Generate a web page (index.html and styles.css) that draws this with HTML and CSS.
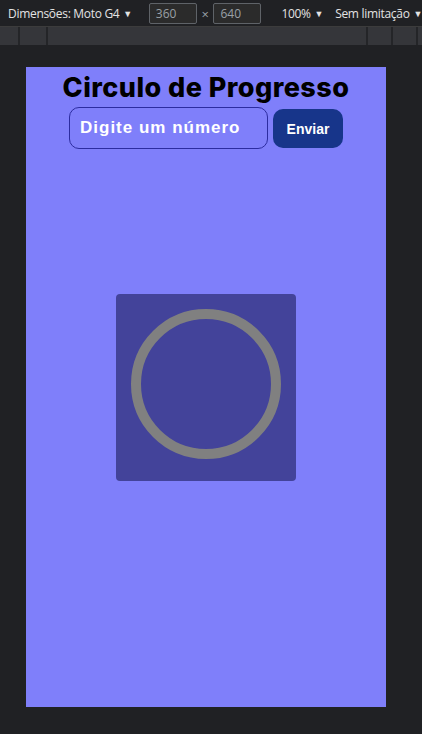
FILE: index.html
```html
<!DOCTYPE html>
<html lang="pt">
<head>
<meta charset="utf-8">
<title>Circulo de Progresso</title>
<link rel="stylesheet" href="styles.css">
</head>
<body>
<div class="toolbar">
  <span class="tb-item tb-dim">Dimensões: Moto G4 <span class="caret">▼</span></span>
  <span class="tb-box">360</span>
  <span class="tb-x">×</span>
  <span class="tb-box">640</span>
  <span class="tb-item tb-zoom">100% <span class="caret">▼</span></span>
  <span class="tb-item tb-thr">Sem limitação <span class="caret">▼</span></span>
</div>
<div class="ruler">
  <span class="seg s1"></span>
  <span class="seg s2"></span>
  <span class="seg s3"></span>
  <span class="seg s4"></span>
  <span class="seg s5"></span>
  <span class="seg s6"></span>
</div>
<div class="stage">
  <div class="device">
    <div class="header">
      <h1 class="title">Circulo de Progresso</h1>
      <form class="form">
        <input class="num" type="text" placeholder="Digite um número">
        <button class="send" type="button">Enviar</button>
      </form>
    </div>
    <div class="card">
      <svg class="ring" width="150" height="150" viewBox="0 0 150 150">
        <circle cx="75" cy="75" r="70" fill="none" stroke="#808080" stroke-width="10"/>
      </svg>
    </div>
  </div>
</div>
</body>
</html>
```

FILE: styles.css
```css
html, body {
  margin: 0;
  padding: 0;
}
body {
  background: #202124;
  width: 422px;
  height: 734px;
  overflow: hidden;
  font-family: "Open Sans", "Noto Sans", sans-serif;
}
.toolbar {
  height: 27px;
  display: flex;
  align-items: center;
  color: #e3e3e3;
  font-size: 12px;
  letter-spacing: -0.3px;
  border-bottom: 1px solid #3c3c3c;
  box-sizing: border-box;
  white-space: nowrap;
}
.caret {
  font-size: 9px;
  position: relative;
  top: -1px;
  margin-left: 1px;
}
.tb-dim { margin-left: 8px; }
.tb-box {
  box-sizing: border-box;
  width: 49px;
  height: 21px;
  border: 1px solid #5f6368;
  background: #2b2b2b;
  color: #9aa0a6;
  padding-left: 6px;
  line-height: 19px;
  border-radius: 2px;
  letter-spacing: 0;
}
.tb-dim + .tb-box { margin-left: 17px; }
.tb-x {
  color: #9aa0a6;
  width: 17px;
  text-align: center;
  font-size: 13px;
  padding-top: 2px;
}
.tb-zoom { margin-left: 20px; }
.tb-thr { margin-left: 12px; }
.ruler {
  height: 18px;
  background: #35363a;
  display: flex;
}
.seg {
  flex-shrink: 0;
  border-right: 2px solid #242528;
  height: 18px;
}
.s1 { width: 18px; }
.s2 { width: 26px; }
.s3 { width: 318px; }
.s4 { width: 23px; }
.s5 { width: 23px; }
.s6 { width: 10px; }
.stage {
  padding: 22px 0 0 26px;
}
.device {
  width: 360px;
  height: 640px;
  background: #7f7ffa;
  display: grid;
  grid-template-areas: "main";
  justify-items: center;
}
.header {
  grid-area: main;
  align-self: start;
  display: flex;
  flex-direction: column;
  align-items: center;
}
.title {
  margin: 2px 0 0;
  font-family: "Inter", "Noto Sans", sans-serif;
  font-weight: 800;
  font-size: 27px;
  line-height: 37px;
  color: #000;
  letter-spacing: 0.45px;
}
.form {
  display: flex;
  align-items: center;
  gap: 5px;
  margin-top: 1px;
}
.num {
  box-sizing: border-box;
  width: 199px;
  height: 42px;
  border: 1px solid #2c2ca0;
  border-radius: 10px;
  background: transparent;
  padding: 0 10px;
  font-family: "Liberation Sans", Arial, sans-serif;
  font-weight: 700;
  font-size: 17px;
  letter-spacing: 1px;
  color: #fff;
  outline: none;
}
.num::placeholder {
  color: #fff;
  opacity: 1;
}
.send {
  box-sizing: border-box;
  width: 70px;
  height: 39px;
  border: none;
  border-radius: 10px;
  background: #17358a;
  color: #fff;
  font-family: "Liberation Sans", Arial, sans-serif;
  font-weight: 700;
  font-size: 14px;
  padding: 0;
  margin-top: 1px;
}
.card {
  grid-area: main;
  align-self: center;
  box-sizing: border-box;
  width: 180px;
  height: 187px;
  background: #43439a;
  border-radius: 4px;
  padding-top: 15px;
  display: flex;
  justify-content: center;
  align-items: flex-start;
}
.ring {
  display: block;
}
```
